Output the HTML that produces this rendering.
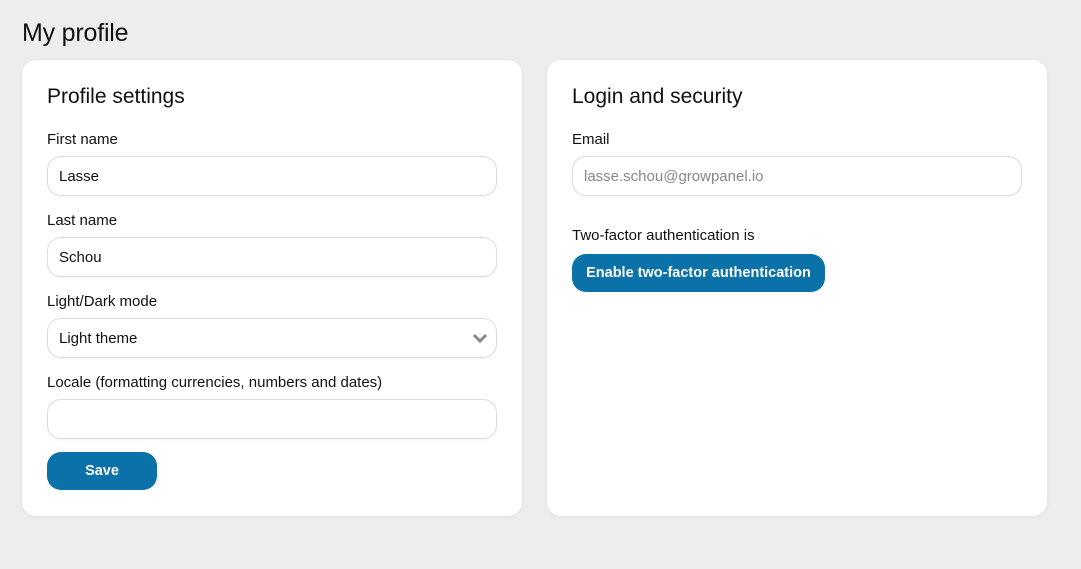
<!DOCTYPE html>
<html><head><meta charset="utf-8"><style>
*{box-sizing:border-box;margin:0;padding:0}
body{width:1081px;height:569px;background:#ededed;font-family:"Liberation Sans",sans-serif;color:#111;position:relative;overflow:hidden}
h1{position:absolute;left:22px;top:19px;font-size:25px;font-weight:400;letter-spacing:-0.2px}
.card{position:absolute;top:60px;width:500px;height:456px;background:#fff;border-radius:14px;box-shadow:0 1px 4px rgba(0,0,0,0.06)}
h2{position:absolute;left:25px;top:25px;font-size:21px;font-weight:400}
.lbl{position:absolute;left:25px;font-size:15px}
.inp{position:absolute;left:25px;width:450px;height:40px;border:1px solid #ddd;border-radius:14px;font-size:15px;padding:11px 11px;box-shadow:0 1px 2px rgba(0,0,0,0.05)}
.btn{position:absolute;left:25px;background:#0a72a8;color:#fff;font-size:14.5px;font-weight:700;border-radius:14px;height:38px;line-height:39px;text-align:center}
</style></head><body>
<h1>My profile</h1>
<div class="card" style="left:22px">
<h2>Profile settings</h2>
<div class="lbl" style="top:71px">First name</div>
<div class="inp" style="top:96px">Lasse</div>
<div class="lbl" style="top:152px">Last name</div>
<div class="inp" style="top:177px">Schou</div>
<div class="lbl" style="top:233px">Light/Dark mode</div>
<div class="inp" style="top:258px">Light theme
<svg style="position:absolute;right:8px;top:13px" width="16" height="12" viewBox="0 0 16 12"><path d="M2 3l6 6 6-6" stroke="#888" stroke-width="3" fill="none"/></svg></div>
<div class="lbl" style="top:314px">Locale (formatting currencies, numbers and dates)</div>
<div class="inp" style="top:339px"></div>
<div class="btn" style="top:392px;width:110px">Save</div>
</div>
<div class="card" style="left:547px">
<h2>Login and security</h2>
<div class="lbl" style="top:71px">Email</div>
<div class="inp" style="top:96px;color:#888">lasse.schou@growpanel.io</div>
<div class="lbl" style="top:167px">Two-factor authentication is</div>
<div class="btn" style="top:194px;width:253px">Enable two-factor authentication</div>
</div>
</body></html>
